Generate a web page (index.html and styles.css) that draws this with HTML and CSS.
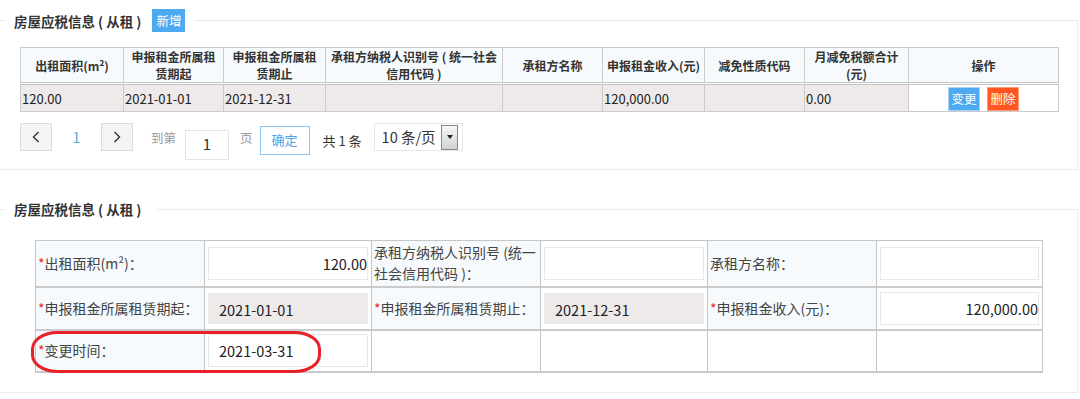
FILE: index.html
```html
<!DOCTYPE html>
<html lang="zh-CN">
<head>
<meta charset="utf-8">
<link rel="stylesheet" href="styles.css">
</head>
<body>
<fieldset class="sec sec1">
  <legend class="legend1"><span class="title">房屋应税信息 ( 从租 )</span><span class="btn-add">新增</span></legend>
  <table class="grid">
    <colgroup>
      <col style="width:103px"><col style="width:100px"><col style="width:102px"><col style="width:177px"><col style="width:100px"><col style="width:102px"><col style="width:100px"><col style="width:104px"><col style="width:150px">
    </colgroup>
    <thead>
      <tr>
        <th>出租面积(m²)</th>
        <th>申报租金所属租赁期起</th>
        <th>申报租金所属租赁期止</th>
        <th>承租方纳税人识别号 ( 统一社会信用代码 )</th>
        <th>承租方名称</th>
        <th>申报租金收入(元)</th>
        <th>减免性质代码</th>
        <th>月减免税额合计(元)</th>
        <th>操作</th>
      </tr>
    </thead>
    <tbody>
      <tr>
        <td>120.00</td>
        <td>2021-01-01</td>
        <td>2021-12-31</td>
        <td></td>
        <td></td>
        <td>120,000.00</td>
        <td></td>
        <td>0.00</td>
        <td class="ops"><span class="btn-edit">变更</span><span class="btn-del">删除</span></td>
      </tr>
    </tbody>
  </table>
  <div class="pager">
    <span class="pg-btn"><svg width="8" height="12" viewBox="0 0 8 12"><polyline points="6.5,1 1.5,6 6.5,11" fill="none" stroke="#333" stroke-width="1.4"/></svg></span>
    <span class="pg-cur">1</span>
    <span class="pg-btn"><svg width="8" height="12" viewBox="0 0 8 12"><polyline points="1.5,1 6.5,6 1.5,11" fill="none" stroke="#333" stroke-width="1.4"/></svg></span>
    <span class="pg-txt pg-goto">到第</span>
    <span class="pg-input">1</span>
    <span class="pg-txt pg-page">页</span>
    <span class="pg-ok">确定</span>
    <span class="pg-total">共 1 条</span>
    <span class="pg-select"><span class="pg-sel-txt">10 条/页</span><span class="pg-arrow"></span></span>
  </div>
</fieldset>

<fieldset class="sec sec2">
  <legend class="legend2"><span class="title">房屋应税信息 ( 从租 )</span></legend>
  <table class="form">
    <colgroup>
      <col style="width:169px"><col style="width:167px"><col style="width:169px"><col style="width:167px"><col style="width:169px"><col style="width:166px">
    </colgroup>
    <tr class="r1">
      <td class="lbl"><span class="req">*</span>出租面积(m²)：</td>
      <td class="val"><div class="inp num">120.00</div></td>
      <td class="lbl">承租方纳税人识别号 (统一社会信用代码 )：</td>
      <td class="val"><div class="inp"></div></td>
      <td class="lbl">承租方名称：</td>
      <td class="val"><div class="inp"></div></td>
    </tr>
    <tr class="r2">
      <td class="lbl"><span class="req">*</span>申报租金所属租赁期起：</td>
      <td class="val"><div class="inp ro">2021-01-01</div></td>
      <td class="lbl"><span class="req">*</span>申报租金所属租赁期止：</td>
      <td class="val"><div class="inp ro">2021-12-31</div></td>
      <td class="lbl"><span class="req">*</span>申报租金收入(元)：</td>
      <td class="val"><div class="inp num">120,000.00</div></td>
    </tr>
    <tr class="r3">
      <td class="lbl"><span class="req">*</span>变更时间：</td>
      <td class="val"><div class="inp date">2021-03-31</div></td>
      <td class="blank"></td>
      <td class="blank"></td>
      <td class="blank"></td>
      <td class="blank"></td>
    </tr>
  </table>
  <div class="mark"></div>
</fieldset>
</body>
</html>
```

FILE: styles.css
```css
* { box-sizing: border-box; }
body {
  margin: 0;
  background: #ffffff;
  font-family: "Noto Sans CJK SC", "Liberation Sans", sans-serif;
  color: #333;
  font-size: 13px;
}
.sec {
  position: relative;
  width: 1078px;
  margin: 0;
  border: 1px solid #ececec;
  border-left: none;
  padding: 0 0 0 6px;
  min-width: 0;
}
.sec1 { margin-top: 9px; padding-bottom: 9px; }
.sec2 { margin-top: 29px; padding-bottom: 19px; }
legend {
  padding: 0;
  display: flex;
  align-items: center;
}
.legend1 { height: 23px; padding: 0 10px 0 8px; }
.legend2 { height: 20px; padding: 0 16px 0 8px; }
.title {
  font-size: 13.5px;
  font-weight: bold;
  color: #333;
  line-height: 20px;
  white-space: pre;
}
.btn-add {
  margin-left: 11px;
  width: 33px;
  height: 23px;
  background: #4eaaf0;
  color: #fff;
  font-size: 12.5px;
  line-height: 23px;
  text-align: center;
}

/* list table */
.grid {
  margin: 15px 0 0 14px;
  width: 1038px;
  table-layout: fixed;
  border-collapse: collapse;
}
.grid th {
  height: 34px;
  background: #f7fafc;
  border: 1px solid #cbcbcb;
  border-bottom: 3px double #c6c6c6;
  font-size: 12px;
  font-weight: bold;
  color: #333;
  line-height: 17px;
  padding: 0 3px;
  text-align: center;
}
.grid td {
  height: 28px;
  background: #eeeaea;
  border: 1px solid #cbcbcb;
  font-size: 13px;
  color: #222;
  padding: 2px 0 0 1px;
  line-height: 18px;
  vertical-align: middle;
}
.grid td.ops {
  background: #fff;
  text-align: center;
  padding: 1px 0 0 0;
}
.btn-edit, .btn-del {
  display: inline-block;
  width: 32px;
  height: 24px;
  color: #fff;
  font-size: 12.5px;
  text-align: center;
  vertical-align: middle;
  line-height: 22px;
}
.btn-edit { background: #4eaaf0; border: 1px solid #a8d3f5; }
.btn-del { background: #ff5722; border: 1px solid #ff9a7a; margin-left: 7px; }

/* pager */
.pager {
  margin: 11px 0 0 14px;
  display: flex;
  align-items: flex-start;
  height: 37px;
}
.pg-btn {
  width: 32px;
  height: 28px;
  background: #f4f4f4;
  border: 1px solid #dcdcdc;
  display: flex;
  align-items: center;
  justify-content: center;
}
.pg-cur {
  width: 49px;
  text-align: center;
  color: #5aa9e6;
  font-size: 14px;
  line-height: 28px;
}
.pg-txt {
  color: #999;
  font-size: 12.5px;
  line-height: 28px;
  margin-top: 1px;
}
.pg-goto { margin-left: 18px; }
.pg-input {
  margin: 7px 0 0 9px;
  width: 44px;
  height: 30px;
  border: 1px solid #e4e4e4;
  text-align: center;
  font-size: 15px;
  line-height: 26px;
  color: #333;
}
.pg-page { margin-left: 11px; }
.pg-ok {
  margin: 3px 0 0 7px;
  width: 50px;
  height: 29px;
  border: 1px solid #8cc6f1;
  color: #4aa3e8;
  font-size: 13px;
  line-height: 26px;
  text-align: center;
}
.pg-total {
  margin: 3px 0 0 13px;
  font-size: 13px;
  line-height: 29px;
  color: #333;
  white-space: pre;
}
.pg-select {
  margin: 0 0 0 12px;
  width: 89px;
  height: 28px;
  border: 1px solid #e8e8e8;
  display: flex;
  align-items: center;
  position: relative;
}
.pg-sel-txt {
  font-size: 14.5px;
  color: #333;
  padding-left: 7px;
  line-height: 26px;
}
.pg-arrow {
  position: absolute;
  left: 66px;
  top: 1px;
  width: 17px;
  height: 25px;
  border: 1px solid #888;
  background: linear-gradient(#f6f6f6, #d2d2d2);
}
.pg-arrow::after {
  content: "";
  position: absolute;
  left: 5px;
  top: 9px;
  border-left: 3px solid transparent;
  border-right: 3px solid transparent;
  border-top: 4px solid #222;
}

/* form table */
.form {
  margin: 21px 0 0 29px;
  width: 1007px;
  table-layout: fixed;
  border-collapse: collapse;
}
.form td {
  border: 1px solid #c6c6c6;
  border-bottom: 2px solid #cacaca;
  padding: 0 3px;
  vertical-align: middle;
}
.form tr.r1 td { height: 46px; }
.form tr.r2 td { height: 43px; }
.form tr.r3 td { height: 42px; }
.form td.lbl {
  background: #f6fafc;
  color: #444;
  font-size: 14px;
  line-height: 21px;
  padding: 0 1px 0 2px;
}
.form td.blank { background: #fff; }
.req { color: #f0242e; }
.inp {
  height: 33px;
  border: 1px solid #e8e8e8;
  background: #fff;
  font-size: 14.5px;
  color: #222;
  line-height: 31px;
  padding: 0 10px;
}
.inp.num { text-align: right; padding: 0; }
.inp.ro { background: #eeeaea; border-color: #eeeaea; height: 31px; line-height: 31px; }

.mark {
  position: absolute;
  left: 31px;
  top: 112px;
  width: 290px;
  height: 42px;
  border: 3px solid #e8202a;
  border-radius: 26px / 18px;
  pointer-events: none;
}
```
